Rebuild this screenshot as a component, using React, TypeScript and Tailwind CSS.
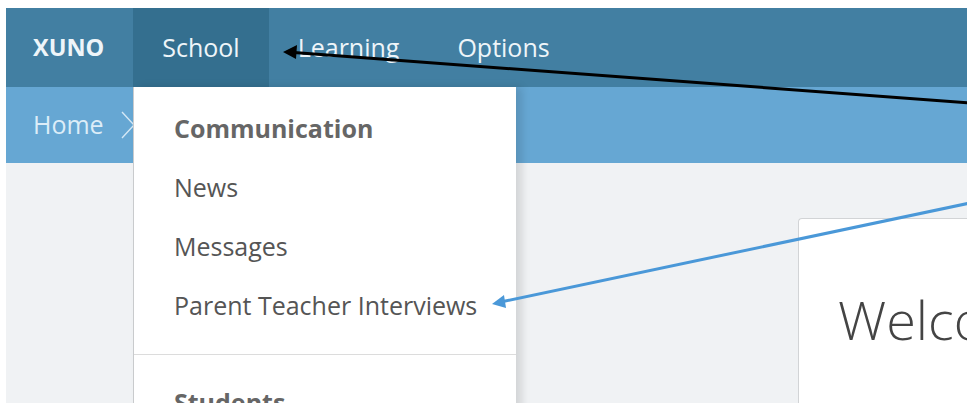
import React from 'react';

const navItems = ['School', 'Learning', 'Options'];
const communicationLinks = ['News', 'Messages', 'Parent Teacher Interviews'];

function Chevron() {
  return (
    <svg width="14" height="28" viewBox="0 0 14 28" className="ml-[17px] shrink-0">
      <path d="M1 1 L13 14 L1 27" fill="none" stroke="#d3e7f5" strokeWidth="1.4" />
    </svg>
  );
}

export default function App() {
  return (
    <div className="relative w-[967px] h-[403px] overflow-hidden bg-white pt-2 pl-1.5 font-['Open_Sans',sans-serif]">
      <div className="relative h-full bg-[#f0f2f4]">
        {/* Top navigation */}
        <nav className="flex h-[79px] items-stretch bg-[#427fa2] text-[25px] text-[#eef5f9]">
          <div className="flex items-center pl-[27px] pr-[29px] text-[23.5px] font-bold">XUNO</div>
          {navItems.map((item) => (
            <div
              key={item}
              className={`flex items-center px-[29px] ${item === 'School' ? 'bg-[#346f8f]' : ''}`}
            >
              {item}
            </div>
          ))}
        </nav>

        {/* Breadcrumb */}
        <div className="flex h-[76px] items-center bg-[#66a7d3] pl-[27px] text-[25px] text-[#dcedf8]">
          <span>Home</span>
          <Chevron />
        </div>

        {/* Page body */}
        <div className="flex pl-[792px] pt-[55px]">
          <div className="h-[200px] flex-1 rounded-tl-[4px] border border-r-0 border-[#d2d4d6] bg-white pl-[39px] pt-[73px]">
            <h1 className="whitespace-nowrap text-[54px] font-light leading-none text-[#444]">Welcome</h1>
          </div>
        </div>

        {/* School dropdown */}
        <div className="absolute left-[127px] top-[79px] w-[383px] h-[340px] border-l border-[#c9cbcd] bg-white pt-3 shadow-[6px_0_8px_rgba(0,0,0,0.12)]">
          <div className="flex h-[59px] items-center px-[40px] text-[25px] font-bold text-[#666]">Communication</div>
          {communicationLinks.map((link) => (
            <div key={link} className="flex h-[59px] items-center whitespace-nowrap px-[40px] text-[25px] text-[#555]">
              {link}
            </div>
          ))}
          <div className="mt-[19px] border-t border-[#dcdcdc] pt-[18px]">
            <div className="flex h-[59px] items-center px-[40px] text-[25px] font-bold text-[#666]">Students</div>
          </div>
        </div>
      </div>

      {/* Callout arrows */}
      <svg className="pointer-events-none absolute inset-0" width="967" height="403" viewBox="0 0 967 403">
        <line x1="294" y1="52.5" x2="970" y2="103" stroke="#000" strokeWidth="3" />
        <polygon points="283,52 297,45 296,59" fill="#000" />
        <line x1="503" y1="301.5" x2="970" y2="203" stroke="#4a98d8" strokeWidth="3" />
        <polygon points="492,304 504,295 506,308" fill="#4a98d8" />
      </svg>
    </div>
  );
}
